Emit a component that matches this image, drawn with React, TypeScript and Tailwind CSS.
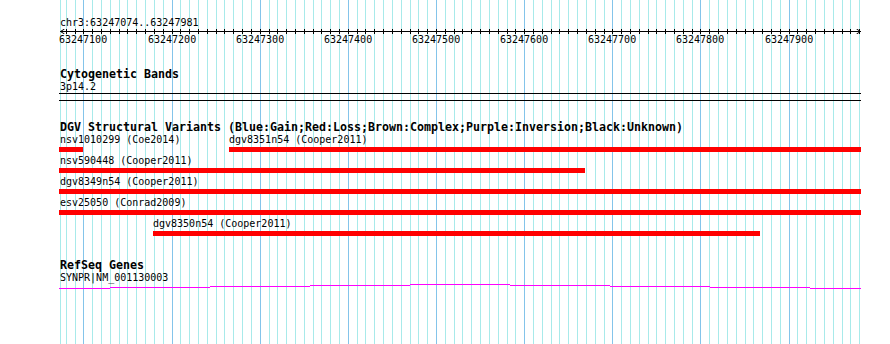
const START = 63247074;
const toX = (p: number) => Math.round(60.5 + (p - START) * 0.8815);

const LIGHT = "#a8eaea";
const DARK = "#84c4ea";

const guides = Array.from({ length: 91 }, (_, i) => 63247080 + i * 10);
const majors = Array.from({ length: 9 }, (_, i) => 63247100 + i * 100);

type Feature = { label: string; x1: number; x2: number; labelX: number };

const dgvRows: Feature[][] = [
  [
    { label: "nsv1010299 (Coe2014)", x1: 59, x2: 83, labelX: 60 },
    { label: "dgv8351n54 (Cooper2011)", x1: 229, x2: 861, labelX: 229 },
  ],
  [{ label: "nsv590448 (Cooper2011)", x1: 59, x2: 585, labelX: 60 }],
  [{ label: "dgv8349n54 (Cooper2011)", x1: 59, x2: 861, labelX: 60 }],
  [{ label: "esv25050 (Conrad2009)", x1: 59, x2: 861, labelX: 60 }],
  [{ label: "dgv8350n54 (Cooper2011)", x1: 153, x2: 760, labelX: 153 }],
];

// gene line drawn in small steps: [from, to, row]
const geneSteps: [number, number, number][] = [
  [59, 110, 4],
  [110, 210, 3],
  [210, 310, 2],
  [310, 410, 1],
  [410, 510, 0],
  [510, 610, 1],
  [610, 710, 2],
  [710, 810, 3],
  [810, 861, 4],
];

function TrackTitle({ children, className = "" }: { children: React.ReactNode; className?: string }) {
  return (
    <div className={`pl-[60px] pb-[2px] text-[11.63px] font-bold leading-[10px] whitespace-nowrap ${className}`}>
      {children}
    </div>
  );
}

function Label({ children }: { children: React.ReactNode }) {
  return <div className="pl-[60px] pb-[1px] leading-[11px] whitespace-nowrap">{children}</div>;
}

export default function App() {
  return (
    <div className="relative w-[890px] h-[344px] overflow-hidden bg-white text-black font-['DejaVu_Sans_Mono',monospace] text-[10px]">
      {/* guidelines */}
      <svg className="absolute inset-0" width={890} height={344}>
        <rect x={60} y={0} width={1} height={344} fill={LIGHT} />
        {guides.map((p) => (
          <rect key={p} x={toX(p)} y={0} width={1} height={344} fill={p % 100 === 0 ? DARK : LIGHT} />
        ))}
      </svg>

      <div className="relative pt-[17px]">
        {/* ruler */}
        <Label>chr3:63247074..63247981</Label>
        <svg width={890} height={5}>
          <rect x={60} y={2} width={801} height={1} fill="#000" />
          {guides.map((p) => (
            <rect key={p} x={toX(p)} y={0} width={1} height={5} fill="#000" />
          ))}
          <path d="M64.5 0 L60.5 2.5 L64.5 5" stroke="#000" strokeWidth={1} fill="none" />
          <path d="M856.5 0 L860.5 2.5 L856.5 5" stroke="#000" strokeWidth={1} fill="none" />
        </svg>
        <div className="relative h-[12px] leading-[11px]">
          {majors.map((p) => (
            <span key={p} className="absolute top-0 w-[48px] text-center" style={{ left: toX(p) - 24 }}>
              {p}
            </span>
          ))}
        </div>

        {/* cytogenetic bands */}
        <TrackTitle className="mt-[23px]">Cytogenetic Bands</TrackTitle>
        <Label>3p14.2</Label>
        <div className="ml-[59px] w-[802px] h-[8px] border-y border-black" />

        {/* DGV */}
        <TrackTitle className="mt-[21px]">
          DGV Structural Variants (Blue:Gain;Red:Loss;Brown:Complex;Purple:Inversion;Black:Unknown)
        </TrackTitle>
        <div className="flex flex-col gap-[3px]">
          {dgvRows.map((row, i) => (
            <div key={i} className="relative h-[18px]">
              {row.map((f) => (
                <div key={f.label} className="absolute top-0 h-[18px]" style={{ left: f.x1, width: f.x2 - f.x1 }}>
                  <div className="leading-[11px] whitespace-nowrap" style={{ paddingLeft: f.labelX - f.x1 }}>
                    {f.label}
                  </div>
                  <div className="mt-[2px] h-[5px] bg-[#ff0000]" />
                </div>
              ))}
            </div>
          ))}
        </div>

        {/* RefSeq */}
        <TrackTitle className="mt-[24px]">RefSeq Genes</TrackTitle>
        <Label>SYNPR|NM_001130003</Label>
        <svg width={890} height={5}>
          {geneSteps.map(([a, b, r]) => (
            <rect key={a} x={a} y={r} width={b - a} height={1} fill="#ff00ff" />
          ))}
        </svg>
      </div>
    </div>
  );
}
